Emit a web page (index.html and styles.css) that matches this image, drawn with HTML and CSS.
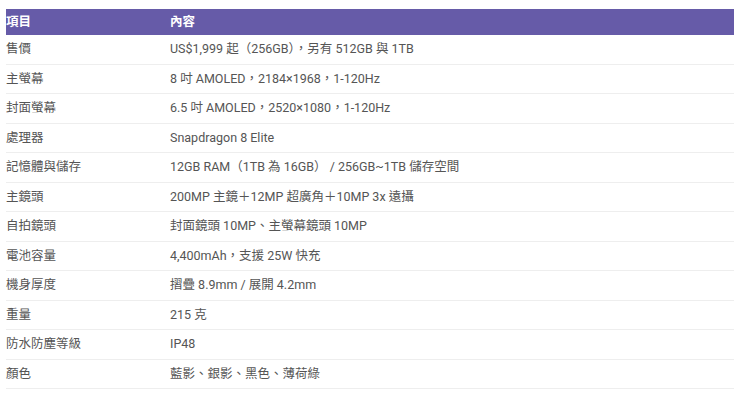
FILE: index.html
```html
<!DOCTYPE html>
<html lang="zh-Hant">
<head>
<meta charset="utf-8">
<link rel="stylesheet" href="styles.css">
</head>
<body>
<table class="spec">
  <thead>
    <tr><th class="c1">項目</th><th>內容</th></tr>
  </thead>
  <tbody>
    <tr><td>售價</td><td>US$1,999 起（256GB），另有 512GB 與 1TB</td></tr>
    <tr><td>主螢幕</td><td>8 吋 AMOLED，2184×1968，1-120Hz</td></tr>
    <tr><td>封面螢幕</td><td>6.5 吋 AMOLED，2520×1080，1-120Hz</td></tr>
    <tr><td>處理器</td><td>Snapdragon 8 Elite</td></tr>
    <tr><td>記憶體與儲存</td><td>12GB RAM（1TB 為 16GB） / 256GB~1TB 儲存空間</td></tr>
    <tr><td>主鏡頭</td><td>200MP 主鏡＋12MP 超廣角＋10MP 3x 遠攝</td></tr>
    <tr><td>自拍鏡頭</td><td>封面鏡頭 10MP、主螢幕鏡頭 10MP</td></tr>
    <tr><td>電池容量</td><td>4,400mAh，支援 25W 快充</td></tr>
    <tr><td>機身厚度</td><td>摺疊 8.9mm / 展開 4.2mm</td></tr>
    <tr><td>重量</td><td>215 克</td></tr>
    <tr><td>防水防塵等級</td><td>IP48</td></tr>
    <tr><td>顏色</td><td>藍影、銀影、黑色、薄荷綠</td></tr>
  </tbody>
</table>
</body>
</html>
```
FILE: styles.css
```css
html, body {
  margin: 0;
  padding: 0;
  background: #ffffff;
}
body {
  padding: 9px 6px 0 6px;
  font-family: Roboto, "Noto Sans CJK TC", sans-serif;
  font-size: 12.5px;
  color: #555555;
}
.spec {
  width: 728px;
  border-collapse: collapse;
}
.spec th {
  background: #665ba8;
  color: #ffffff;
  font-weight: 700;
  text-align: left;
  padding: 4px 0;
  line-height: 18px;
}
.spec th.c1 {
  width: 164px;
}
.spec td {
  padding: 4px 0;
  line-height: 20.5px;
  border-bottom: 1px solid #eeeeee;
  vertical-align: middle;
}
```
